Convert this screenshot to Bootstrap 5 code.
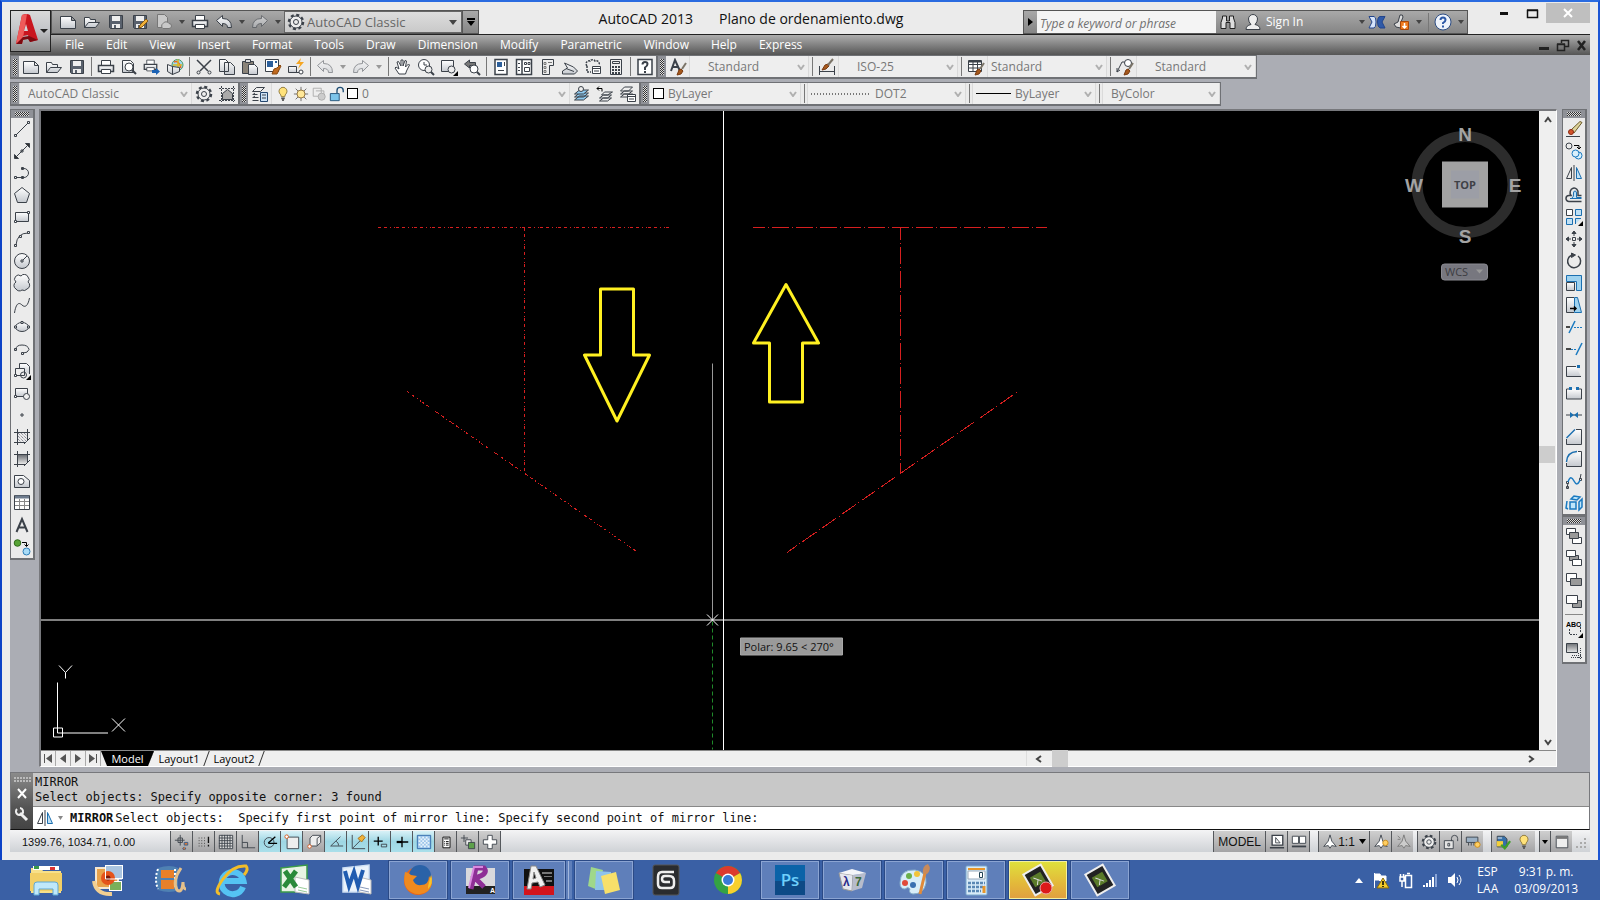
<!DOCTYPE html>
<html lang="en">
<head>
<meta charset="utf-8">
<meta name="viewport" content="width=device-width, initial-scale=1">
<title>AutoCAD 2013 - Plano de ordenamiento.dwg</title>
<link href="https://cdn.jsdelivr.net/npm/bootstrap@5.3.0/dist/css/bootstrap.min.css" rel="stylesheet">
<style>
:root{--ui:"Open Sans","Noto Sans",sans-serif;--edge:#6f7175;--face:#ebebeb;--dock:#abadb4}
body{font:12px/16px var(--ui);color:#111;background:#ebebeb;overflow:hidden}
button,select,input{font:inherit;color:inherit;border:0;background:none;padding:0;border-radius:0}
svg{display:block;flex:none;overflow:visible}
.ico{width:18px;height:18px;fill:none;stroke:#3b4149;stroke-width:1}
.frame{border:2px solid #0b41c6;border-top-color:#2a6be0;border-bottom:0;border-right-color:#1b55d4;padding:0 8px 8px;background:#ebebeb;min-height:0}
.titlebar{height:32px;padding-top:8px}
.appbtn{width:41px;height:42px;border:1px solid #222;background:linear-gradient(#d9d9d9,#c4c6ca 45%,#8c8c8c);position:relative;z-index:2}
.strip{height:24px;border:1px solid #555;background:linear-gradient(#a9a9a9,#858585)}
.strip .tb{width:24px}
.strip .dd{width:12px;color:#444}
.qcombo{width:178px;background:linear-gradient(#ddd,#c9c9c9);border:1px solid #666;color:#666;padding:0 4px 0 2px;gap:2px}
.qcombo select{font-size:13px}
.custom{width:16px;border-left:1px solid #555}
.ttl{font-size:14px;line-height:18px;color:#111;gap:26px}
.search{width:179px;background:#f4f4f4;font-style:italic;padding:3px 3px 0;color:#666}
.search::placeholder{color:#707070;opacity:1}
.signin{width:121px}
.winbtns{margin-top:-7px;height:20px;margin-left:22px}
.winbtns button{width:28px;display:flex;align-items:center;justify-content:center}
.winbtns .cls{width:44px;background:#bfbfbf}
.menubar{height:21px;background:linear-gradient(#aeaeae,#555);border-top:1px solid #222;padding-left:41px}
.menubar a{color:#fff;text-decoration:none;line-height:18px}
.menus{padding-left:14px;gap:22px}
.bar{height:24px;border:1px solid var(--edge);border-bottom-width:2px;background:var(--face)}
.row2{margin-top:3px}
.grip{width:8px;background:#8f9197;flex:none;display:flex;align-items:center;justify-content:center}
.grip::before{content:"";width:4px;height:16px;background:repeating-conic-gradient(#333 0 25%,#ddd 0 50%) 0 0/2px 2px}
.tb{width:23px;height:21px;display:flex;align-items:center;justify-content:center;flex:none}
.tb.dim{opacity:.5}
.dd{width:13px;flex:none;color:#999;display:flex;align-items:center;justify-content:center}
.tsep{width:6px;flex:none}
.tsep::before{content:"";display:block;width:1px;height:19px;margin:1px auto 0;background:#777}
.combo{background-color:#eee;border-left:1px solid #dadada;border-right:1px solid #dadada;color:#777;display:flex;align-items:center;gap:2px;padding-left:3px}
.combo select,.qcombo select{appearance:none;flex:1 1 0;min-width:0;height:100%;outline:0}
.combo select{background:url("data:image/svg+xml,%3Csvg xmlns='http://www.w3.org/2000/svg' width='8' height='6'%3E%3Cpath d='M1 1l3 4 3-4' fill='none' stroke='%23b0b0b0' stroke-width='2'/%3E%3C/svg%3E") no-repeat right 3px center}
.cb-style{width:120px}.in18{padding-left:18px}
.cb-ws{width:173px;padding-left:8px}.cb-lay{width:299px}.cb-col{width:152px}.cb-lt{width:159px}.cb-lw{width:124px}.cb-ps{width:118px;padding-left:8px}
.swatch{width:11px;height:11px;border:1px solid #000;background:#fff;flex:none;margin-right:2px}
.combo .ico{width:16px;height:16px}
.dockarea{background:var(--dock);min-height:0}
.work{min-height:0;padding-top:3px}
.vdock{width:25px;border:1px solid var(--edge);border-width:1px 2px 2px 1px;background:var(--face)}
.vgrip{height:8px;background:#8f9197;display:flex;align-items:center;justify-content:center}
.vgrip::before{content:"";width:14px;height:4px;background:repeating-conic-gradient(#333 0 25%,#ddd 0 50%) 0 0/2px 2px}
.vdock .tb{height:22px;width:22px}
.rdock{margin:0 3px 0 5px}
.hsep{height:4px;border-top:1px solid #888;margin:1px 2px 0}
.viewbox{border:2px solid #77787c;border-width:2px 1px 1px 2px;border-right-color:#fff;border-bottom-color:#fff;background:#efefef;min-width:0;margin-bottom:1px}
.model-space{background:#000;min-width:0;min-height:0;position:relative;overflow:hidden}
.model-space svg{position:absolute;inset:0;width:100%;height:100%;overflow:hidden}
.vscroll{width:17px;background:#efefef;flex:none}
.vscroll button,.hscroll button{width:17px;height:17px;display:flex;align-items:center;justify-content:center}
.thumb{background:#cdcdcd;width:16px;height:17px}
.above{flex:53 1 0}.below{flex:45 1 0}
.tabrow{height:16px;background:#efefef;border-top:1px solid #888;font-size:11px;line-height:15px}
.tabrow a{color:#000;text-decoration:none;position:relative;width:55px;padding-right:5px;text-align:center;display:block}
.tabrow a::after{content:"";position:absolute;right:2px;top:0;width:1px;height:15px;background:#333;transform:skewX(-20deg)}
.tabrow a.on{background:#000;color:#fff;width:53px;padding:0;clip-path:polygon(0 0,100% 0,calc(100% - 6px) 100%,6px 100%)}
.nav15{width:15px;height:15px;border-right:1px solid #aaa;display:flex;align-items:center;justify-content:center}
.hscroll{width:35%;border-left:1px solid #ddd;padding-right:17px}
.cmd{height:58px;border:1px solid #77787c;border-bottom-color:#111;font:12px/15px "DejaVu Sans Mono","Liberation Mono",monospace;white-space:pre}
.cmdside{width:22px;background:linear-gradient(#8b8b8b,#555 60%,#444)}
.hist{background:#c8c8c8;height:34px;padding:2px 2px 0;border-bottom:1px solid #888}
.prompt{background:#fff;height:22px;padding-left:3px}
.prompt b{font-weight:700;margin:0 2px 0 3px}
.prompt input{flex:1 1 0;min-width:0;outline:0}
.statusbar{height:22px;background:linear-gradient(#f4f4f5,#cfd2d6);padding-top:1px;font:12px/16px "Liberation Sans",Arial,sans-serif}
.statusbar .ico{width:16px;height:16px}
.coord{width:160px;padding-left:12px;font-size:11px}
.sb{width:22px;height:21px;border-left:1px solid #55585c;background:linear-gradient(#cfcfcf,#a3a3a5);display:flex;align-items:center;justify-content:center;flex:none}
.sb.act{background:linear-gradient(#d8f1f7,#9fd7e4 50%,#a9dfea)}
.sb.rule{width:1px}
.sb.scl{width:51px}
.sb.more{width:11px}
.taskbar{height:40px;background:#3a60a5;color:#fff;padding-left:15px}
.task{width:62px;height:38px;padding:0 2px;flex:none}
.task>span{display:flex;align-items:center;justify-content:center;height:38px;border:1px solid transparent}
.task.run>span{background:#5f7fba;border-color:#8ba4d2;outline:1px solid #2b4a86}
.task.rec>span{background:linear-gradient(#dfe03c,#e3b83a 60%,#e0a040);border-color:#f3efa0;outline:1px solid #2b4a86}
.task.stack>span{margin-right:6px;box-shadow:3px 0 0 #5f7fba,4px 0 0 #a3b7dc,7px 0 0 #5f7fba}
.task .ico{width:34px;height:34px;stroke:none}
.tray{gap:10px;padding-right:22px}
.clock{line-height:17px}
.tray .clock+.clock{margin-left:6px}
</style>
</head>
<body class="vh-100 d-flex flex-column">

<svg width="0" height="0" class="position-absolute" aria-hidden="true"><defs>
<linearGradient id="g1" x2="0" y2="1"><stop stop-color="#fff"/><stop offset="1" stop-color="#c4c8ce"/></linearGradient>
<linearGradient id="g2" x2="0" y2="1"><stop stop-color="#6d7075"/><stop offset="1" stop-color="#e8e8e8"/></linearGradient>
<symbol id="new" viewBox="0 0 18 18"><path fill="url(#g1)" d="M1.500 3.500h11l4 4v8h-15zM12.500 3.500v4h4"/></symbol>
<symbol id="open" viewBox="0 0 18 18"><path fill="url(#g1)" d="M1.500 14.500v-10h5l1 2h5v3M1.500 14.500l4-5h11l-4 5z"/></symbol>
<symbol id="save" viewBox="0 0 18 18"><path fill="#59616d" d="M2.500 2.500h13v13h-12l-1-1z"/><path fill="#eee" stroke="none" d="M5 3h8v5H5zM5 11h8v4H5z"/><path fill="#59616d" stroke="none" d="M7 12h2v3H7z"/></symbol>
<symbol id="saveas" viewBox="0 0 18 18"><use href="#save"/><path d="M8 15l1-3 6-6 2 2-6 6z" fill="#f0b23a" stroke="#8a5a12"/></symbol>
<symbol id="export" viewBox="0 0 18 18"><g stroke="#777" fill="#c9c9c9"><path d="M2.500 1.500h7l3 3v10h-10z"/><path d="M8 15.500a3 3 0 010-5 3.500 3.500 0 016 0 2.500 2.500 0 010 5z"/></g></symbol>
<symbol id="print" viewBox="0 0 18 18"><path fill="#fff" d="M4.500 7V2.500h9V7"/><path fill="url(#g1)" stroke-width="1.500" d="M1.500 7.500h15v6h-15z"/><path fill="#fff" d="M4.500 11.500h9v4h-9z"/></symbol>
<symbol id="preview" viewBox="0 0 18 18"><path fill="url(#g1)" d="M2.500 2.500h8l3 3v9h-11z"/><circle cx="9" cy="9" r="4" fill="#fff"/><path stroke-width="2" d="M12 12l4 4"/></symbol>
<symbol id="publish" viewBox="0 0 18 18"><use href="#print" width="15" height="15"/><path fill="#1b62b5" stroke="none" d="M9 12h4v-2l4 3.500-4 3.500v-2H9z"/></symbol>
<symbol id="cube3d" viewBox="0 0 18 18"><circle cx="11.500" cy="7" r="5.500" fill="#9fd8ef" stroke="#4a9a6a"/><path stroke="#e8632a" stroke-width="1.500" d="M8 4q5-2 7 6"/><path stroke="#dcb820" stroke-width="1.500" d="M12 1.500v9M7 7h9"/><path fill="url(#g1)" d="M1.500 6.500l5 2v8l-5-3zM6.500 8.500l7 1v4l-7 3z"/></symbol>
<symbol id="cut" viewBox="0 0 18 18"><path stroke-width="1.500" d="M2 2l11 11M16 2L5 13"/><circle cx="3.500" cy="14.500" r="1.500"/><circle cx="14.500" cy="14.500" r="1.500"/></symbol>
<symbol id="copy" viewBox="0 0 18 18"><path fill="url(#g1)" d="M1.500 1.500h6l3 3v9h-9zM6.500 4.500h6l4 4v8h-10z"/></symbol>
<symbol id="paste" viewBox="0 0 18 18"><path fill="#8a8378" d="M1.500 3.500h11v12h-11z"/><path fill="#ddd" d="M4.500 1.500h5v3h-5z"/><path fill="url(#g1)" d="M7.500 6.500h6l3 3v7h-9z"/></symbol>
<symbol id="match" viewBox="0 0 18 18"><path fill="#fff" d="M1.500 1.500h13v12h-13z"/><path fill="#2c5f9b" stroke="none" d="M3 3h6v6H3zM11 3h2v2h-2z"/><path fill="#c06a1e" stroke="#8a4a12" d="M8 16l2-5 3-1 3-3 1 1-2 4-2 4z"/></symbol>
<symbol id="blk" viewBox="0 0 18 18"><path fill="url(#g1)" d="M1.500 14.500v-6h8v6zM9 14.500h3"/><circle cx="14" cy="14" r="2" fill="#fff"/><path stroke="none" fill="#f5a623" d="M14 0l-5 6h4l-2 5 6-7h-4z"/></symbol>
<symbol id="undo" viewBox="0 0 18 18"><path fill="url(#g1)" d="M1.500 7.500l6-5v3q9 0 9 9h-4q0-4-5-4v3z"/></symbol>
<symbol id="redo" viewBox="0 0 18 18"><path fill="url(#g1)" d="M16.500 7.500l-6-5v3q-9 0-9 9h4q0-4 5-4v3z"/></symbol>
<symbol id="pan" viewBox="0 0 18 18"><path fill="#fff" d="M5 16l-4-6 1-1 3 2-2-7 1.500-.5L7 8l0-6h2v6l2-5.500 1.500.5-1 6 3-3 1 1-3 6-1 3z"/></symbol>
<symbol id="zoomrt" viewBox="0 0 18 18"><circle cx="7" cy="7" r="5.500" fill="#fff"/><path d="M7 4v3h3"/><circle cx="11.500" cy="11.500" r="3.500" fill="#eee"/><path stroke-width="2" d="M14 14l3 3"/></symbol>
<symbol id="zoomwin" viewBox="0 0 18 18"><path fill="url(#g1)" d="M1.500 2.500h12v11h-12z"/><circle cx="11.500" cy="11.500" r="3.500" fill="#eee"/><path stroke="none" fill="#000" d="M18 13v5h-5z"/></symbol>
<symbol id="zoomprev" viewBox="0 0 18 18"><path fill="#777" d="M1.500 6l5-4v2.500h6v3h-6V10z"/><circle cx="11" cy="11" r="4" fill="#fff"/><path stroke-width="2" d="M14 14l3 3"/></symbol>
<symbol id="props" viewBox="0 0 18 18"><path fill="#fff" stroke-width="1.500" d="M3 1.500h12v15H3z"/><path fill="#2c5f9b" stroke="none" d="M5 4h5v5H5z"/><path d="M12.500 4v4M6 12.500h6"/></symbol>
<symbol id="dcenter" viewBox="0 0 18 18"><path fill="#fff" stroke-width="1.500" d="M1.500 1.500h15v15h-15zM7 1.500v15"/><path d="M3 5.500h2M3 9.500h2M3 12.500h2M9.500 4.500h2v2h-2zM13 4.500h2v2h-2zM9.500 9.500h5v4h-5z"/></symbol>
<symbol id="palette" viewBox="0 0 18 18"><path fill="#eee" d="M4.500 1.500h11v6h-4v9h-7z"/><path stroke="#777" d="M6 4.500h2v2H6zM10 4.500h4M6 8.500h2v2H6zM6 12.500h2v2H6z"/></symbol>
<symbol id="sheet" viewBox="0 0 18 18"><path fill="url(#g1)" d="M1.500 13l5-3-3-5 9 4 4 4-3 3h-12zM5 10.500l8 3"/></symbol>
<symbol id="markup" viewBox="0 0 18 18"><path stroke-width="1.500" stroke-dasharray="2 1" d="M3 8a3 3 0 013-5 3 3 0 015 0 3 3 0 014 4M3 8v6h4"/><path fill="#fff" d="M8.500 8.500h8v7h-8zM8.500 10.500h8M10 13h5"/></symbol>
<symbol id="calc" viewBox="0 0 18 18"><path fill="#eee" d="M3.500 1.500h11v15h-11zM5.500 3.500h7v2h-7z"/><path stroke-width="2" stroke-dasharray="2 1" d="M5 9h8M5 12h8M5 15h8"/></symbol>
<symbol id="help" viewBox="0 0 18 18"><path fill="#fff" stroke-width="1.500" d="M2 1.500h14v15H2z"/><path stroke-width="2" d="M6.500 6.500q0-2.500 2.500-2.500t2.500 2q0 2-2.500 3.500V12M9 13v2"/></symbol>
<symbol id="brush" viewBox="0 0 18 18"><path fill="#a5581c" stroke="#7a3a10" d="M8 17l2-5 2-1 2 2-2 3z"/><path stroke="#7b7468" stroke-width="2" d="M13 11l4-6"/></symbol>
<symbol id="astyle" viewBox="0 0 18 18"><path stroke-width="2" d="M2 13L6 2l5 11M3 9h6"/><use href="#brush"/></symbol>
<symbol id="dimstyle" viewBox="0 0 18 18"><path d="M1.500 8v9M16.500 8v9M2 13.500h14"/><path fill="#a5581c" stroke="#7a3a10" d="M4 12l3-5 3-1 1 2-3 3z"/><path stroke="#7b7468" stroke-width="2" d="M10 7l5-6"/></symbol>
<symbol id="tabstyle" viewBox="0 0 18 18"><path fill="#fff" d="M1.500 2.500h13v11h-13zM1.500 6.500h13M1.500 10h13M6 4v9M10.500 4v9"/><path d="M2 3.500h12" stroke-width="2"/><use href="#brush"/></symbol>
<symbol id="mlstyle" viewBox="0 0 18 18"><path d="M1 14l5-10h5M1 10v4l3-2"/><circle cx="12" cy="5" r="3.500" fill="#fff"/><use href="#brush"/></symbol>
<symbol id="gear" viewBox="0 0 18 18"><circle cx="9" cy="9" r="7" stroke-width="2.500" stroke-dasharray="3 2.500"/><circle cx="9" cy="9" r="6" fill="#eee"/><circle cx="9" cy="9" r="2.500"/></symbol>
<symbol id="wsframe" viewBox="0 0 18 18"><path stroke-dasharray="2 1" d="M1 3.500h16M1 15.500h16M3.500 1v16M15.500 1v16"/><path fill="#aaa" d="M4.500 14.500v-6l5-4 5 4v6z"/></symbol>
<symbol id="layprop" viewBox="0 0 18 18"><path fill="#eee" d="M1.500 6.500l4-4h8l-4 4zM1.500 9.500h5M1.500 12.500h6M1.500 15.500h6M4 8l-2 1.500M4 11l-2 1.500"/><path fill="#cde2f5" stroke="#24466e" d="M9.500 7.500h7v9h-7z"/><path d="M11 10h4M11 13h4"/></symbol>
<symbol id="bulb" viewBox="0 0 18 18"><path fill="#ffe27a" stroke="#8b7435" d="M7 12q0-2-2-4a4.500 4.500 0 118 0q-2 2-2 4z"/><path stroke="#555" stroke-width="2" d="M7 14h4M8 16h2"/></symbol>
<symbol id="sun" viewBox="0 0 18 18"><path stroke="#666" d="M9 1v16M1 9h16M3 3l12 12M15 3L3 15"/><circle cx="9" cy="9" r="4.500" fill="#ffe89a" stroke="#8b6b35"/></symbol>
<symbol id="vpf" viewBox="0 0 18 18"><g stroke="#aaa"><path d="M2.500 2.500h9v9h-9zM5.500 5.500h9v5"/><circle cx="12" cy="12" r="4" fill="#ccc"/></g></symbol>
<symbol id="lock" viewBox="0 0 18 18"><path fill="#7cc4ea" stroke="#1d4d74" d="M1.500 8.500h10v8h-10z"/><path stroke="#1d4d74" stroke-width="1.500" d="M9 8V5a3.500 3.500 0 017 0v2"/></symbol>
<symbol id="lockg" viewBox="0 0 18 18"><path fill="#e4e4e4" d="M1.500 7.500h10v9h-10z"/><path d="M5.500 10.500h2v3h-2zM9.500 8V5a3.500 3.500 0 017 0v3"/></symbol>
<symbol id="lay1" viewBox="0 0 18 18"><path fill="#8fcaf0" d="M1.500 15l5-4h9l-5 4zM1.500 12l5-4h9l-5 4z"/><path fill="#8fcaf0" d="M1.500 9l5-4h9l-5 4z"/><circle cx="8" cy="4" r="2.500" fill="#eee"/></symbol>
<symbol id="lay2" viewBox="0 0 18 18"><path fill="#eee" d="M3.500 16l4-3h8l-4 3zM3.500 13l4-3h8l-4 3zM5.500 10l3-3h8l-5 3z"/><path stroke="#000" d="M1 3.500h5v3M3 1.500l-2 2 2 2"/></symbol>
<symbol id="lay3" viewBox="0 0 18 18"><path fill="#eee" d="M1.500 12l4-3h8l-4 3zM1.500 9l4-3h8l-4 3zM1.500 6l4-4h8l-4 4z"/><path fill="#fff" d="M8.500 9.500h8v7h-8zM8.500 11.500h8M10 14h5"/></symbol>
<symbol id="line" viewBox="0 0 18 18"><path d="M3 15L15 3M1.500 14.500h2v2h-2zM14.500 1.500h2v2h-2z"/></symbol>
<symbol id="xline" viewBox="0 0 18 18"><path d="M2 16L16 2M8 8h2v2H8z"/><path fill="#333" d="M1.500 12.500v4h4zM12.500 1.500h4v4z"/></symbol>
<symbol id="pline" viewBox="0 0 18 18"><path d="M3 13.500h8a4.500 4.500 0 000-9h-2M1.500 12.500h2v2h-2zM8.500 12.500h2v2h-2zM8.500 3.500h2v2h-2z"/></symbol>
<symbol id="polygon" viewBox="0 0 18 18"><path fill="url(#g1)" d="M9 1.500l7.500 6-3 9h-9l-3-9z"/></symbol>
<symbol id="rect" viewBox="0 0 18 18"><path fill="url(#g1)" d="M2.500 4.500h13v9h-13z"/><path fill="#fff" d="M1.500 12.500h2v2h-2zM14.500 3.500h2v2h-2z"/></symbol>
<symbol id="arc" viewBox="0 0 18 18"><path d="M3 15Q4 3 15 3M1.500 14.500h2v2h-2zM14.500 1.500h2v2h-2zM6.500 5.500h2v2h-2z"/></symbol>
<symbol id="circ" viewBox="0 0 18 18"><circle cx="9" cy="9" r="7.500" fill="url(#g1)"/><path d="M8 8h2v2H8zM10 8l4-4"/></symbol>
<symbol id="cloud" viewBox="0 0 18 18"><path fill="url(#g1)" d="M3 8a3.500 3.500 0 015-6 4 4 0 017 1 3.500 3.500 0 010 5 4 4 0 01-1 7 4 4 0 01-5 1 4 4 0 01-6-1 4 4 0 010-7z"/></symbol>
<symbol id="spline" viewBox="0 0 18 18"><path d="M1.500 17C3 7 6 6 9 9s6 1 7.500-7"/></symbol>
<symbol id="ellipse" viewBox="0 0 18 18"><ellipse cx="9" cy="9" rx="6.500" ry="4.500" fill="url(#g1)"/><path fill="#fff" d="M1.500 8h2v2h-2zM14.500 8h2v2h-2zM8 3.500h2v2H8z"/></symbol>
<symbol id="earc" viewBox="0 0 18 18"><path d="M3 9.500Q3 5 9 5t7 4.500Q15 13 10 13M1.500 8.500h2v2h-2zM8.500 12.500h2v2h-2z"/></symbol>
<symbol id="insblk" viewBox="0 0 18 18"><path fill="url(#g1)" d="M6.500 6V1.500h7l3 3V12"/><path fill="#eee" d="M2.500 6.500h9v7h-9z"/><circle cx="10.500" cy="13" r="3"/><path fill="#fff" d="M1.500 12.500h2v2h-2z"/><path stroke="none" fill="#000" d="M18 13v5h-5z"/></symbol>
<symbol id="mkblk" viewBox="0 0 18 18"><path fill="url(#g1)" d="M2.500 4.500h12v8h-12z"/><circle cx="13.500" cy="12.500" r="3" fill="#eee"/><path fill="#fff" d="M1.500 11.500h2v2h-2z"/></symbol>
<symbol id="point" viewBox="0 0 18 18"><path d="M8 8h2v2H8z"/></symbol>
<symbol id="hatch" viewBox="0 0 18 18"><path d="M1 4.500h16M1 14.500h12M4.500 1v16M14.500 1v12M11 16l6-6"/><path stroke="#667" stroke-dasharray="1 1" d="M5 5l9 9M8 5l6 6M5 8l6 6M11 5l3 3M5 11l3 3"/></symbol>
<symbol id="grad" viewBox="0 0 18 18"><path fill="url(#g2)" stroke="none" d="M5 5h9v9H5z"/><path d="M1 4.500h16M1 14.500h12M4.500 1v16M14.500 1v12M11 16l6-6"/></symbol>
<symbol id="region" viewBox="0 0 18 18"><path fill="url(#g1)" d="M1.500 3.500h9l6 5v7h-15z"/><circle cx="8" cy="9.500" r="3" fill="#fff"/></symbol>
<symbol id="table" viewBox="0 0 18 18"><path fill="#fff" d="M1.500 1.500h15v14h-15z"/><path stroke="#888" d="M2 7.500h14M2 11.500h14M6.500 5v10M11.500 5v10"/><path stroke-width="3" stroke="#6d7b8d" d="M2 3h14"/></symbol>
<symbol id="mtext" viewBox="0 0 18 18"><path stroke-width="2" d="M3.500 16L9 3l5.500 13M5.500 11.500h7"/></symbol>
<symbol id="addsel" viewBox="0 0 18 18"><circle cx="4.500" cy="5" r="3.300" fill="#57a336" stroke="#2f6a1a"/><circle cx="13.500" cy="13.500" r="3.500" fill="#a9dcf7" stroke="#2f7fb8"/><path stroke="#000" d="M9 4.500h4.500V8M11.500 6.500l2 2 2-2"/></symbol>
<symbol id="erase" viewBox="0 0 18 18"><path d="M1 16.500h14"/><path fill="#dcd29a" stroke="#6b5a2a" d="M6 10l9-8.500 2 1L9 13z"/><circle cx="6" cy="12" r="2.500" fill="#d4532a" stroke="#8a2a12"/></symbol>
<symbol id="cp" viewBox="0 0 18 18"><circle cx="4" cy="4" r="3"/><path stroke="#000" d="M9 3.500h5V7M12 5l2 2 2-2"/><g fill="#d9f0fc" stroke="#1b7ac0"><circle cx="13.500" cy="13.500" r="3.500"/><circle cx="10.500" cy="11.500" r="3.500"/></g></symbol>
<symbol id="mirror" viewBox="0 0 18 18"><path d="M6.500 3.500v11h-5zM9 1v16"/><path fill="#bfe0f5" stroke="#1b6fb0" d="M11.500 3.500v11h5z"/></symbol>
<symbol id="offset" viewBox="0 0 18 18"><path stroke-width="1.500" d="M16.500 15.500H4a3 3 0 010-6h2a4 4.500 0 117-2v2h3.500"/><path fill="#bfe0f5" stroke="#1b6fb0" d="M16.500 12.500H5M7 12q2-1 1.500-5a1.500 2 0 013 0v4.500h5"/></symbol>
<symbol id="array" viewBox="0 0 18 18"><path fill="#fff" d="M1.500 1.500h6v6h-6z"/><path fill="#bfe0f5" stroke="#1b6fb0" d="M10.500 1.500h6v6h-6zM1.500 10.500h6v6h-6zM10.500 16v-5.500H16"/><path stroke="none" fill="#000" d="M18 13v5h-5z"/></symbol>
<symbol id="move" viewBox="0 0 18 18"><path d="M7.500 7.500h3v3h-3zM1 9h5M12 9h5M9 1v5M9 12v5"/><path fill="#3b4149" d="M1 9l2.500-2v4zM17 9l-2.500-2v4zM9 1L7 3.500h4zM9 17l-2-2.500h4z"/></symbol>
<symbol id="rotate" viewBox="0 0 18 18"><path stroke-width="1.500" d="M6 3.500a6.500 6.500 0 107 .5"/><path fill="#3b4149" d="M6.500 1l4 2-4 2.500z"/></symbol>
<symbol id="scale" viewBox="0 0 18 18"><path fill="#9fd2ef" stroke="#1b6fb0" d="M1.500 1.500h15v15h-5v-9h-10z"/><path fill="url(#g1)" d="M1.500 8.500h8v8h-8z"/></symbol>
<symbol id="stretch" viewBox="0 0 18 18"><path fill="url(#g1)" d="M9 1.500H1.500v15H9"/><path fill="#9fd2ef" stroke="#1b6fb0" d="M9.500 1.500h3l4 15h-7z"/><path stroke="#000" stroke-width="1.500" d="M5 12.500h6M9 10.500l2 2-2 2"/></symbol>
<symbol id="trim" viewBox="0 0 18 18"><path stroke="#111" stroke-width="1.500" d="M1 9h4"/><path stroke="#1b7ac0" stroke-width="1.500" d="M4 15L10 3"/><path stroke="#1b7ac0" stroke-dasharray="2 1" d="M9 9.500h8"/></symbol>
<symbol id="extend" viewBox="0 0 18 18"><path stroke="#111" stroke-width="1.500" d="M1 9h5"/><path stroke="#1b7ac0" stroke-dasharray="2 1" d="M6 9.500h5"/><path stroke="#1b7ac0" stroke-width="1.500" d="M11 15l6-12"/></symbol>
<symbol id="brkpt" viewBox="0 0 18 18"><path fill="url(#g1)" d="M16 14.500H1.500v-10H11"/><path d="M12 3h3v3h-3z" fill="#1b6fb0" stroke="none"/></symbol>
<symbol id="brk" viewBox="0 0 18 18"><path fill="url(#g1)" d="M4 5H1.500v10h15V5H14"/><path d="M4 3h3v3H4zM11 3h3v3h-3z" fill="#1b6fb0" stroke="none"/></symbol>
<symbol id="join" viewBox="0 0 18 18"><path d="M1 9h16"/><path fill="#1b6fb0" stroke="none" d="M5 6l4 3-4 3zM13 6L9 9l4 3z"/></symbol>
<symbol id="chamfer" viewBox="0 0 18 18"><path fill="url(#g1)" d="M1.500 11v5.500h15v-15H11"/><path stroke="#1b6fb0" stroke-width="1.500" d="M1.500 10L10 1.500"/></symbol>
<symbol id="fillet" viewBox="0 0 18 18"><path fill="url(#g1)" d="M1.500 13v3.500h15v-15H13"/><path stroke="#1b6fb0" stroke-width="1.500" d="M1.500 12Q2 2 12 1.500"/></symbol>
<symbol id="blend" viewBox="0 0 18 18"><path d="M2 16l1-5M15 7l1-5M1.500 14.500h2v2h-2zM1.500 9.500h2v2h-2zM14.500 6.500h2v2h-2z"/><path stroke="#1b7ac0" stroke-width="1.500" d="M3 10c2-6 4-5 6-1s4 4 6-1"/></symbol>
<symbol id="explode" viewBox="0 0 18 18"><path fill="#bfe6fa" stroke="#1b7ac0" stroke-width="1.500" d="M5 8h6v7H5zM2 7l-1 7 2 1M6 5l3-3 6 1-3 3zM14 8l3-3v8l-3 3z"/></symbol>
<symbol id="ord1" viewBox="0 0 18 18"><path fill="#fff" d="M1.500 1.500h9v6h-9zM7.500 10.500h9v6h-9z"/><path fill="#999" d="M4.500 5.500h9v6h-9z"/></symbol>
<symbol id="ord2" viewBox="0 0 18 18"><path fill="#999" d="M4.500 6.500h9v5h-9z"/><path fill="#fff" d="M1.500 1.500h9v6h-9zM7.500 10.500h9v6h-9z"/></symbol>
<symbol id="ord3" viewBox="0 0 18 18"><path fill="#fff" d="M1.500 2.500h10v8h-10z"/><path fill="#999" d="M5.500 7.500h11v7h-11z"/></symbol>
<symbol id="ord4" viewBox="0 0 18 18"><path fill="#999" d="M7.500 7.500h9v7h-9z"/><path fill="#fff" d="M1.500 2.500h11v8h-11z"/></symbol>
<symbol id="ordtxt" viewBox="0 0 18 18"><text x="1" y="7" font-family="Liberation Sans" font-weight="700" font-size="7" fill="#000" stroke="none">ABC</text><path stroke-dasharray="2 1" d="M4.500 9v5.500H12M15.500 4v8"/><path stroke="none" fill="#000" d="M18 13v5h-5z"/></symbol>
<symbol id="ordhatch" viewBox="0 0 18 18"><path fill="url(#g2)" d="M1.500 1.500h11v9h-11z"/><path stroke-dasharray="1 1" d="M7 13.500h9M15.500 6v11M6 15.500h11M13.500 11v6"/></symbol>
<symbol id="snap" viewBox="0 0 18 18"><path d="M1 7h11M7 1v12M4.500 4.500h5v5h-5z"/><path fill="#d5783a" stroke="#345c8c" d="M11.500 9.500h4v3h-4zM11 15a1.500 1.500 0 101 0"/></symbol>
<symbol id="dots" viewBox="0 0 18 18"><path stroke="#333" stroke-dasharray="1 2" d="M3 4.500h9M3 7.500h9M3 10.500h9M3 13.500h9"/><path stroke="#111" stroke-width="1.500" d="M14 3v7M14 12v2"/></symbol>
<symbol id="grid" viewBox="0 0 18 18"><path fill="#ddd" d="M1.500 1.500h15v15h-15zM4.500 1v15M7.500 1v15M10.500 1v15M13.500 1v15M1 4.500h15M1 7.500h15M1 10.500h15M1 13.500h15"/></symbol>
<symbol id="ortho" viewBox="0 0 18 18"><path d="M2.500 1v14.500H17M2.500 9.500h6v6"/></symbol>
<symbol id="polar" viewBox="0 0 18 18"><circle cx="8" cy="9.500" r="5.500"/><path stroke="#000" stroke-width="1.500" d="M7 10l8-7M7 10.500h10"/></symbol>
<symbol id="osnap" viewBox="0 0 18 18"><path fill="#eee" d="M3.500 3.500h13v13h-13z"/><circle cx="3" cy="3" r="2" stroke="#d9581a" fill="#fff"/></symbol>
<symbol id="osnap3" viewBox="0 0 18 18"><path fill="#eee" d="M4.500 4.500l3-3h9v8l-4 4h-8zM12.500 13V5l4-3"/><circle cx="4" cy="14" r="2" stroke="#d9581a" fill="#fff"/></symbol>
<symbol id="otrack" viewBox="0 0 18 18"><path d="M14 3L3 13.500h14M9 8q3 2 3 5"/></symbol>
<symbol id="ducs" viewBox="0 0 18 18"><path d="M2.500 1v15.500H17M3 16L12 7"/><path fill="#f0b23a" stroke="#a56a12" d="M9 5l5-4 3 3-4 5z"/></symbol>
<symbol id="dyn" viewBox="0 0 18 18"><path stroke="#000" stroke-width="1.500" d="M2 8h10M7 3v10"/><path d="M10.500 11.500h6v3h-6z"/></symbol>
<symbol id="lwt" viewBox="0 0 18 18"><path stroke="#000" stroke-width="2.500" d="M3 9h6"/><path stroke="#000" stroke-width="1.500" d="M9 9h7M9 3v12"/></symbol>
<symbol id="tpy" viewBox="0 0 18 18"><path fill="#9cc5ea" stroke="#2c66a8" d="M1.500 1.500h15v15h-15z"/><path stroke="#e8f3fb" stroke-width="2" stroke-dasharray="2 2" d="M3 4h12M5 6h10M3 8h12M5 10h10M3 12h12M5 14h10"/></symbol>
<symbol id="qp" viewBox="0 0 18 18"><path fill="#fff" stroke="#000" d="M5.500 3.500h8v12h-8z"/><path stroke="#000" d="M7 5.500h5M7 8.500h1M7 10.500h1M7 12.500h1M9 8.500h3M9 10.500h3M9 12.500h3"/></symbol>
<symbol id="cycle" viewBox="0 0 18 18"><path d="M1 4.500h8M4.500 1v8"/><path fill="#eee" d="M6.500 6.500h6v6h-6z"/><path fill="#5da04a" d="M9.500 9.500h7v7h-7z"/></symbol>
<symbol id="plus" viewBox="0 0 18 18"><path fill="#fff" d="M6.500 1.500h5v5h5v5h-5v5h-5v-5h-5v-5h5z"/></symbol>
<symbol id="lay-p" viewBox="0 0 18 18"><path fill="#fff" stroke-width="1.500" d="M3.500 1.500h12v11h-12zM1 15.500h16"/><path d="M7.500 4v6h5z"/></symbol>
<symbol id="quick" viewBox="0 0 18 18"><path fill="#fff" d="M1.500 2.500h7v8h-7zM9.500 2.500h7v8h-7z"/><path stroke-width="2" d="M1 14h16"/></symbol>
<symbol id="anno" viewBox="0 0 18 18"><path fill="#fff" d="M9 1l2 7 5 6-5-1-2 3-2-3-5 1 5-6z"/></symbol>
<symbol id="annog" viewBox="0 0 18 18"><path fill="#ccc" stroke="#777" d="M10 1l2 7 5 6-5-1-2 3-2-3-5 1 5-6zM3 2l3 3M3 6h3"/></symbol>
<symbol id="anno2" viewBox="0 0 18 18"><use href="#anno"/><circle cx="14" cy="10" r="3" fill="#ffcf62" stroke="#c98a1a"/></symbol>
<symbol id="hw" viewBox="0 0 18 18"><path fill="#9bb0c4" d="M1.500 3.500h13v6h-13zM4 10v3M7 10v3M10 10v3"/><circle cx="14" cy="12" r="3" fill="#ffcf62" stroke="#c98a1a"/></symbol>
<symbol id="trust" viewBox="0 0 18 18"><path fill="#3770a8" d="M2.500 2.500h8l3 3v9h-11z"/><path fill="#f3cf3a" stroke="none" d="M2 8h7v6H2z"/><path stroke="#fff" d="M3 4.500h5"/><path stroke="#3fa02a" stroke-width="2.500" d="M7 12l4 4 6-8"/></symbol>
<symbol id="clean" viewBox="0 0 18 18"><path fill="#eee" d="M2.500 2.500h13v13h-13z"/><path stroke-width="3" stroke="#777" d="M3 4h12"/></symbol>
<symbol id="bino" viewBox="0 0 18 18"><path fill="#ddd" stroke="#222" d="M3.500 5L2 9.500v6h5v-6h4v6h5v-6L14.500 5V3h-4v5h-3V3h-4z"/></symbol>
<symbol id="user" viewBox="0 0 18 18"><path fill="#eee" d="M2 16.500q0-4 5-5Q4.500 9 4.500 6a4.500 4.500 0 019 0q0 3-2.500 5.500 5 1 5 5z"/></symbol>
<symbol id="xch" viewBox="0 0 18 18"><path fill="#d6e4fa" stroke="#23458c" d="M1 3.500h5q2 0 2 5.500t-2 6H1L4 9z"/><path fill="#2f5aa8" stroke="#23458c" d="M17 3.500h-5Q9.500 4 9.500 9t2.500 6h5L14 9z"/></symbol>
<symbol id="a360" viewBox="0 0 18 18"><path fill="#ddd" d="M8 2q3-1 3 2L9 9l5 3-1 4-9-2-2-3 4-2z"/><path fill="#ee7a1e" stroke="#a8480a" d="M8.500 8.500h8v8h-8z"/><path stroke="#fff" stroke-width="1.500" d="M12.500 10v5M10.500 13l2 2 2-2"/></symbol>
<symbol id="qhelp" viewBox="0 0 18 18"><circle cx="9" cy="9" r="8" fill="#eef3fb" stroke="#2d4d84"/><path stroke="#2d59a8" stroke-width="2" d="M6.500 7q0-2.500 2.500-2.500T11.500 7q0 1.500-2.500 3v1M9 12.500v2"/></symbol>
</defs></svg>

<div class="frame flex-grow-1 d-flex flex-column">
  <header class="titlebar d-flex">
    <button class="appbtn flex-shrink-0" aria-label="Application menu">
      <svg width="39" height="40" viewBox="0 0 39 40"><path fill="#c9151e" d="M5 33L11 4q5-2 8 0l8 25-8 2-2-7-5 1-1 7z"/><path fill="#ef5a5a" d="M11 4l5-1-5 30-6 0z"/><path fill="#7e0a10" d="M5 33l7-7 6-1 9 4-8 2-2-3-5 1-1 4z"/><path fill="#d5d5d8" d="M13 20l2-7 2 7z"/><path fill="#222" d="M29 18h8l-4 4z"/></svg>
    </button>
    <div class="strip d-flex align-items-stretch flex-shrink-0 ps-1">
      <div class="d-flex" data-tools="new:New open:Open save:Save saveas:Save_as export:Export v print:Plot undo:Undo v ~redo:Redo v"></div>
      <div class="qcombo d-flex align-items-center"><svg class="ico"><use href="#gear"/></svg><select aria-label="Workspace switching"><option>AutoCAD Classic</option></select><svg width="8" height="5"><path d="M0 0h8L4 5z" fill="#444"/></svg></div>
      <button class="custom d-flex align-items-center justify-content-center" aria-label="Customize"><svg width="8" height="8"><path d="M0 0h8v2H0zM0 3h8L4 8z" fill="#000"/></svg></button>
    </div>
    <div class="ttl d-flex flex-grow-1 justify-content-center"><span>AutoCAD 2013</span><span>Plano de ordenamiento.dwg</span></div>
    <div class="strip d-flex align-items-stretch flex-shrink-0">
      <button class="px-1" aria-label="Collapse"><svg width="5" height="8"><path d="M0 0l5 4-5 4z" fill="#000"/></svg></button>
      <input class="search" type="text" aria-label="Search" placeholder="Type a keyword or phrase">
      <div class="d-flex text-white align-items-center">
        <button class="tb" aria-label="Find"><svg class="ico"><use href="#bino"/></svg></button>
        <button class="signin d-flex align-items-center ms-1"><svg class="ico me-1"><use href="#user"/></svg>Sign In<svg class="ms-auto" width="6" height="4"><path d="M0 0h6L3 4z" fill="#444"/></svg></button>
        <div class="d-flex" data-tools="xch:Exchange a360:Autodesk_360 v | qhelp:Help v"></div>
      </div>
    </div>
    <div class="d-flex flex-shrink-0 winbtns">
      <button aria-label="Minimize"><svg width="8" height="3"><path d="M0 0h8v3H0z" fill="#111"/></svg></button>
      <button aria-label="Maximize"><svg width="11" height="9"><path d="M.5 1.500h10v7H.5zM0 1h11" fill="none" stroke="#111" stroke-width="1.500"/></svg></button>
      <button class="cls" aria-label="Close"><svg width="8" height="8"><path d="M0 0l8 8M8 0L0 8" stroke="#fff" stroke-width="2"/></svg></button>
    </div>
  </header>
  <nav class="menubar d-flex align-items-center flex-shrink-0">
    <div class="menus d-flex">
      <a href="#">File</a><a href="#">Edit</a><a href="#">View</a><a href="#">Insert</a><a href="#">Format</a><a href="#">Tools</a><a href="#">Draw</a><a href="#">Dimension</a><a href="#">Modify</a><a href="#">Parametric</a><a href="#">Window</a><a href="#">Help</a><a href="#">Express</a>
    </div>
    <div class="ms-auto d-flex align-items-center gap-2 pe-1">
      <button aria-label="Minimize drawing"><svg width="10" height="9"><path d="M0 6h10v3H0z" fill="#222"/></svg></button>
      <button aria-label="Restore drawing"><svg width="12" height="11"><path d="M4.500 3V.5h7v6H8M.5 4.500h7v6h-7zM0 4h8" fill="none" stroke="#222" stroke-width="1.500"/></svg></button>
      <button aria-label="Close drawing"><svg width="9" height="9"><path d="M1 0l7 9M8 0L1 9" stroke="#222" stroke-width="2.500"/></svg></button>
    </div>
  </nav>

  <main class="dockarea flex-grow-1 d-flex flex-column">
    <div class="d-flex">
      <div class="bar d-flex"><span class="grip"></span><div class="d-flex" data-tools="new:New open:Open save:Save | print:Plot preview:Plot_preview publish:Publish cube3d:3D_print | cut:Cut copy:Copy paste:Paste match:Match_properties blk:Block_editor | ~undo:Undo v ~redo:Redo v | pan:Pan zoomrt:Zoom zoomwin:Zoom_window zoomprev:Zoom_previous | props:Properties dcenter:Design_center palette:Tool_palettes sheet:Sheet_sets markup:Markup calc:Calculator | help:Help"></div></div>
      <div class="bar d-flex"><span class="grip"></span><div class="d-flex" data-tools="astyle:Text_style"></div>
        <div class="combo cb-style in18"><select aria-label="Text style"><option>Standard</option></select></div><span class="tsep"></span>
        <div class="d-flex" data-tools="dimstyle:Dimension_style"></div><div class="combo cb-style in18"><select aria-label="Dimension style"><option>ISO-25</option></select></div><span class="tsep"></span>
        <div class="d-flex" data-tools="tabstyle:Table_style"></div><div class="combo cb-style"><select aria-label="Table style"><option>Standard</option></select></div><span class="tsep"></span>
        <div class="d-flex" data-tools="mlstyle:Multileader_style"></div><div class="combo cb-style in18"><select aria-label="Multileader style"><option>Standard</option></select></div>
      </div>
    </div>
    <div class="d-flex row2">
      <div class="bar d-flex"><span class="grip"></span><div class="combo cb-ws"><select aria-label="Workspace"><option>AutoCAD Classic</option></select></div><div class="d-flex" data-tools="gear:Workspace_settings wsframe:My_workspace"></div></div>
      <div class="bar d-flex"><span class="grip"></span><div class="d-flex" data-tools="layprop:Layer_properties"></div>
        <div class="combo cb-lay"><svg class="ico"><use href="#bulb"/></svg><svg class="ico"><use href="#sun"/></svg><svg class="ico"><use href="#vpf"/></svg><svg class="ico"><use href="#lock"/></svg><span class="swatch"></span><select aria-label="Layer"><option>0</option></select></div>
        <div class="d-flex" data-tools="lay1:Make_layer_current lay2:Layer_previous lay3:Layer_states"></div></div>
      <div class="bar d-flex"><span class="grip"></span>
        <div class="combo cb-col"><span class="swatch"></span><select aria-label="Color"><option>ByLayer</option></select></div><span class="tsep"></span>
        <div class="combo cb-lt"><svg width="62" height="2"><path d="M0 1h60" stroke="#000" stroke-dasharray="1 2"/></svg><select aria-label="Linetype"><option>DOT2</option></select></div><span class="tsep"></span>
        <div class="combo cb-lw"><svg width="37" height="2"><path d="M0 .5h35" stroke="#000"/></svg><select aria-label="Lineweight"><option>ByLayer</option></select></div><span class="tsep"></span>
        <div class="combo cb-ps"><select aria-label="Plot style"><option>ByColor</option></select></div></div>
    </div>

    <div class="d-flex flex-grow-1 work">
      <aside class="vdock align-self-start"><div class="vgrip"></div><div data-tools="line:Line xline:Construction_line pline:Polyline polygon:Polygon rect:Rectangle arc:Arc circ:Circle cloud:Revision_cloud spline:Spline ellipse:Ellipse earc:Ellipse_arc insblk:Insert_block mkblk:Make_block point:Point hatch:Hatch grad:Gradient region:Region table:Table mtext:Multiline_text addsel:Add_selected"></div></aside>
      <section class="viewbox flex-grow-1 d-flex flex-column ms-1">
        <div class="d-flex flex-grow-1">
          <div class="model-space flex-grow-1">
            <svg viewBox="41 112 1498 638" preserveAspectRatio="xMidYMid meet" fill="none" stroke-width="1">
              <g stroke="#d61f1f" shape-rendering="crispEdges">
                <path stroke-dasharray="3 3 3 3 1 3 1 1" d="M378 227.500h294M524.500 228v246M407 392l231 161"/>
                <path stroke-dasharray="17 3 1 3" stroke-dashoffset="5" d="M753 227.500h294M900.500 228v246M787 553l231-161"/>
              </g>
              <path stroke="#fff021" stroke-width="3" stroke-linejoin="round" d="M600.500 289.500h33v66h16l-32.500 66-32.500-66h16zM786 285l32.500 58.500h-16v59h-33v-59h-16z"/>
              <path stroke="#999" d="M712.500 364v256"/><path stroke="#1f8a2a" stroke-dasharray="4 3" d="M712.500 622v128"/>
              <g stroke="#fff"><path d="M0 620.500h1600M723.500 0v900M707 615l11 11M718 615l-11 11"/>
              <path d="M57.500 683v50.500H108M53.500 728.500h9v9h-9zM59 666l6.500 7 6.500-7M65.500 673v6M112 719l13 13M125 719l-13 13"/></g>
              <circle cx="1465" cy="185" r="48" stroke="#2c2c2c" stroke-width="11"/>
              <path fill="#a2a2a2" d="M1442 162h46v46h-46z"/><path fill="#9c9ea6" d="M1451 171h28v28h-28z"/>
              <g font-family="Liberation Sans" font-weight="700" text-anchor="middle" font-size="19" fill="#a3a3a3"><text x="1465" y="141">N</text><text x="1465" y="243">S</text><text x="1414" y="192">W</text><text x="1515" y="192">E</text>
              <text x="1465" y="189" font-family="Open Sans" font-size="11" fill="#3f4146">TOP</text></g>
              <rect x="1441.500" y="264.500" width="46" height="16" rx="3" fill="#77777f" stroke="#8b8b92"/>
              <text x="1445" y="276" font-family="Open Sans" font-size="11" fill="#3c3c42">WCS</text><path fill="#999" d="M1476 270h7l-3.500 4z"/>
              <path fill="#9a9a9a" stroke="#a8a8a8" d="M740.500 638.500h102v17h-102z"/><text x="744" y="651" font-family="Open Sans" font-size="11" fill="#111">Polar: 9.65 &lt; 270°</text>
            </svg>
          </div>
          <div class="vscroll d-flex flex-column">
            <button aria-label="Scroll up"><svg width="8" height="6"><path d="M1 5l3-4 3 4" fill="none" stroke="#444" stroke-width="2"/></svg></button>
            <div class="flex-grow-1 d-flex flex-column"><div class="above"></div><div class="thumb"></div><div class="below"></div></div>
            <button aria-label="Scroll down"><svg width="8" height="6"><path d="M1 1l3 4 3-4" fill="none" stroke="#444" stroke-width="2"/></svg></button>
          </div>
        </div>
        <div class="tabrow d-flex flex-shrink-0">
          <button class="nav15" aria-label="First layout"><svg width="8" height="9"><path d="M0 0h1v9H0zM8 0v9L2 4.500z" fill="#555"/></svg></button>
          <button class="nav15" aria-label="Previous layout"><svg width="6" height="9"><path d="M6 0v9L0 4.500z" fill="#555"/></svg></button>
          <button class="nav15" aria-label="Next layout"><svg width="6" height="9"><path d="M0 0v9l6-4.500z" fill="#555"/></svg></button>
          <button class="nav15" aria-label="Last layout"><svg width="8" height="9"><path d="M7 0h1v9H7zM0 0v9l6-4.500z" fill="#555"/></svg></button>
          <a class="on" href="#">Model</a><a href="#">Layout1</a><a href="#">Layout2</a>
          <div class="hscroll d-flex ms-auto align-items-center">
            <button class="ms-1" aria-label="Scroll left"><svg width="6" height="8"><path d="M5 1L1 4l4 3" fill="none" stroke="#444" stroke-width="2"/></svg></button>
            <div class="thumb ms-1"></div><div class="flex-grow-1"></div>
            <button aria-label="Scroll right"><svg width="6" height="8"><path d="M1 1l4 3-4 3" fill="none" stroke="#444" stroke-width="2"/></svg></button>
          </div>
        </div>
      </section>
      <div class="rdock">
        <aside class="vdock"><div class="vgrip"></div><div data-tools="erase:Erase cp:Copy mirror:Mirror offset:Offset array:Array move:Move rotate:Rotate scale:Scale stretch:Stretch trim:Trim extend:Extend brkpt:Break_at_point brk:Break join:Join chamfer:Chamfer fillet:Fillet blend:Blend explode:Explode"></div></aside>
        <aside class="vdock"><div class="vgrip"></div><div data-tools="ord1:Bring_to_front ord2:Send_to_back ord3:Bring_above ord4:Send_under - ordtxt:Text_to_front ordhatch:Hatch_to_back"></div></aside>
      </div>
    </div>

    <div class="cmd d-flex flex-shrink-0 mt-1">
      <div class="cmdside d-flex flex-column align-items-center">
        <svg width="18" height="12"><path d="M1 5h17M1 8h17" stroke="#bbb" stroke-width="2" stroke-dasharray="2 1"/></svg>
        <button class="mt-1" aria-label="Close command line"><svg width="10" height="9"><path d="M1 0l8 9M9 0L1 9" stroke="#fff" stroke-width="2"/></svg></button>
        <button class="mt-2" aria-label="Customize command line"><svg width="14" height="16" viewBox="0 0 14 16"><path d="M5 7l7 7" stroke="#eee" stroke-width="3"/><path d="M2 3a3.500 3.500 0 005 5 3.500 3.500 0 00-2-6" fill="none" stroke="#eee" stroke-width="2"/></svg></button>
      </div>
      <div class="flex-grow-1 d-flex flex-column">
        <div class="hist">MIRROR<br>Select objects: Specify opposite corner: 3 found</div>
        <label class="prompt d-flex align-items-center"><svg class="ico"><use href="#mirror"/></svg><svg class="mx-1" width="5" height="4"><path d="M0 0h5L2.500 4z" fill="#888"/></svg><b>MIRROR</b><input type="text" aria-label="Command" value="Select objects:  Specify first point of mirror line: Specify second point of mirror line:"></label>
      </div>
    </div>
  </main>

  <footer class="statusbar d-flex flex-shrink-0">
    <div class="coord align-self-center">1399.76, 1034.71, 0.00</div>
    <div class="d-flex" data-status="snap:Infer dots:Snap grid:Grid ortho:Ortho *polar:Polar *osnap:Object_snap osnap3:3D_snap *otrack:Tracking *ducs:Dynamic_UCS *dyn:Dynamic_input *lwt:Lineweight *tpy:Transparency qp:Quick_properties cycle:Cycling plus:Annotation_monitor"></div>
    <span class="sb rule"></span>
    <div class="d-flex ms-auto">
      <button class="sb px-1 w-auto">MODEL</button><div class="d-flex" data-status="lay-p:Layout quick:Quick_view"></div><span class="sb rule me-1"></span>
      <button class="sb ms-1 scl"><svg class="ico"><use href="#anno"/></svg>1:1<svg class="ms-1" width="7" height="5"><path d="M0 0h7L3.500 5z"/></svg></button><div class="d-flex" data-status="anno2:Annotation_visibility annog:Add_scales"></div>
      <div class="d-flex ms-1" data-status="gear:Workspace lockg:Lock hw:Hardware"></div>
      <button class="sb ms-2" aria-label="Trusted"><svg class="ico"><use href="#trust"/></svg></button><button class="sb border-0" aria-label="Isolate objects"><svg class="ico"><use href="#bulb"/></svg></button>
      <button class="sb ms-1 more" aria-label="Status menu"><svg width="6" height="4"><path d="M0 0h6L3 4z"/></svg></button>
      <div class="d-flex" data-status="clean:Clean_screen"></div>
      <svg class="align-self-end mb-1 mx-1" width="10" height="10"><path d="M8 0h2v2H8zM4 4h2v2H4zM8 4h2v2H8zM0 8h2v2H0zM4 8h2v2H4zM8 8h2v2H8z" fill="#aaa"/></svg>
    </div>
  </footer>
</div>

<nav class="taskbar d-flex align-items-center flex-shrink-0">
  <button class="task" aria-label="Explorer"><span><svg class="ico" viewBox="0 0 34 34"><path fill="#f7e08a" d="M2 5h10l2 3h18v22H2z"/><path fill="#fff" d="M4 3h26v4H4z"/><path fill="#3a9a4a" d="M5 3h5v3H5z"/><path fill="#d33" d="M21 4h5v3h-5z"/><path fill="#f2cf66" d="M1 10h32v18H1z"/><path fill="#bfe8fa" stroke="#5fa8d4" d="M5 32V22q0-3 3-3h18q3 0 3 3v10h-5v-6H10v6z"/></svg></span></button>
  <button class="task" aria-label="Photo viewer"><span><svg class="ico" viewBox="0 0 34 34"><path fill="#f4e6d0" d="M4 4h24v22H4z"/><path fill="#e8a24a" d="M6 6h20v18H6z"/><path fill="#fff" d="M14 2h18v14H14zM18 18h13v10H18z"/><path fill="#a9c4e0" d="M15 3h16v12H15z"/><path fill="#7ab05a" d="M19 19h11v8H19z"/><circle cx="17" cy="15" r="7" fill="#e5531a"/><circle cx="17" cy="15" r="2.500" fill="#7a1a0a"/><path stroke="#fff" d="M14.500 3v13H31" fill="none"/><path fill="none" stroke="#f2cf92" stroke-width="4" d="M3 18q2 14 18 13"/></svg></span></button>
  <button class="task" aria-label="Media"><span><svg class="ico" viewBox="0 0 34 34"><path fill="#4f81b3" d="M5 5q12-4 20 0v22q-8 4-20 0-5-10 0-22z"/><path fill="#e8802a" d="M8 7h13v8H8zM8 17h13v9H8z"/><path stroke="#fff" stroke-width="2" stroke-dasharray="2 2" fill="none" d="M5 6q-4 10 0 20M22 6v20"/><path fill="none" stroke="#e5c08a" stroke-width="3" d="M28 5q-9 13-4 22 5 4 6-8 0 7 3 7"/></svg></span></button>
  <button class="task" aria-label="Internet Explorer"><span><svg class="ico" viewBox="0 0 34 34"><path fill="none" stroke="#55c3f3" stroke-width="6" d="M28 24a11 11 0 11.500-6H9"/><path fill="none" stroke="#f1bd2a" stroke-width="3" d="M5 31Q-2 30 8 16T31 3q3 3-2 9"/></svg></span></button>
  <button class="task" aria-label="Excel"><span><svg class="ico" viewBox="0 0 34 34"><path fill="#e8f4e4" stroke="#3b9a4a" stroke-width="1.500" d="M4 5l26-3v27H4z"/><path fill="#fff" stroke="#bbb" d="M18 14l14 3v14l-14-2z"/><path stroke="#2a8a3a" stroke-width="5" d="M8 8l11 16M19 8L7 24"/><path stroke="#9c9" d="M21 24l9 2M21 27l9 2"/></svg></span></button>
  <button class="task" aria-label="Word"><span><svg class="ico" viewBox="0 0 34 34"><path fill="#eaf2fb" stroke="#cfe0f4" stroke-width="1.500" d="M4 5l26-3v27H4z"/><path fill="#fff" stroke="#bbb" d="M20 14l12 3v14l-12-2z"/><path fill="none" stroke="#1f5bb0" stroke-width="4" d="M6 8l4 15 5-14 4 14 5-16"/><path stroke="#89b" d="M21 24l9 2M21 27l9 2"/></svg></span></button>
  <button class="task run" aria-label="Firefox"><span><svg class="ico" viewBox="0 0 34 34"><circle cx="17" cy="18" r="14" fill="#e8661a"/><circle cx="19" cy="13" r="11" fill="#2a62a8"/><path fill="#f08a1e" d="M4 9q3 0 6 3l6 1-4 4q2 6 8 5 8 0 8-9 6 8-1 15-8 6-17 1Q1 24 4 9z"/><path fill="#f8c52a" d="M30 12q3 8-3 14 0-3 1-7z"/></svg></span></button>
  <button class="task run" aria-label="Revit"><span><svg class="ico" viewBox="0 0 34 34"><path fill="#d9d9dc" d="M3 5h29v19H3z"/><path fill="#222" d="M3 23h29v8H3z"/><path fill="none" stroke="#8e2f96" stroke-width="5" d="M8 26l5-21h8q5 6-9 10l9 9"/><path fill="none" stroke="#d98ae0" stroke-width="2" d="M6 25l5-21h9"/><text x="27" y="30" font-family="Liberation Sans" font-weight="700" font-size="7" fill="#fff">A</text></svg></span></button>
  <button class="task run stack" aria-label="AutoCAD"><span><svg class="ico" viewBox="0 0 34 34"><path fill="#111" d="M2 6h30v17H2z"/><path fill="#d3141c" d="M2 23h30v9H2z"/><path fill="#777" stroke-width="1" d="M20 9h10v2H20zM22 13h8v1h-8zM24 17h6v2h-6z"/><path fill="#f0f0f0" stroke="#888" d="M5 26l4-23h5l9 19-5 2-2-5-6 1-1 6zM11 16l3-1-2-6z"/></svg></span></button>
  <button class="task run" aria-label="Sticky Notes"><span><svg class="ico" viewBox="0 0 34 34"><path fill="#9fd88a" d="M4 4l12 3-5 20-10-4z"/><path fill="#8ec3ea" d="M9 8l15 1v18H8z"/><path fill="#f7e06a" d="M14 13l15-4 4 18-15 4z"/></svg></span></button>
  <button class="task" aria-label="3ds Max"><span><svg class="ico" viewBox="0 0 34 34"><rect x="4" y="2" width="26" height="30" rx="2" fill="#2a2c2f" stroke="#555"/><path fill="none" stroke="#eee" stroke-width="2.500" d="M25 9H13q-4 0-4 5v7q0 4 4 4h8q4 0 4-4v-3q0-5-5-5h-4q-3 0-3 3t3 3h5"/></svg></span></button>
  <button class="task" aria-label="Chrome"><span><svg class="ico" viewBox="0 0 34 34"><circle cx="17" cy="17" r="14" fill="#34a343"/><path fill="#dd3a2e" d="M17 17L4.900 10a14 14 0 0124.200 0z"/><path fill="#f8d02e" d="M17 17l12.100-7A14 14 0 0117 31z"/><circle cx="17" cy="17" r="6.500" fill="#fff"/><circle cx="17" cy="17" r="5" fill="#3a7ad6"/></svg></span></button>
  <button class="task run" aria-label="Photoshop"><span><svg class="ico" viewBox="0 0 34 34"><path fill="#0b63a8" d="M2 2h30v30H2z"/><path fill="#0d4a86" d="M2 18h30v14H2z"/><text x="17" y="23" text-anchor="middle" font-family="Open Sans" font-weight="600" font-size="17" fill="#6fd0fb">Ps</text></svg></span></button>
  <button class="task run" aria-label="Dictionary"><span><svg class="ico" viewBox="0 0 34 34"><path fill="#e4e6ee" stroke="#999" d="M4 10l14 2-1 16-9-2z"/><path fill="#b7bccb" d="M18 12l13-2-4 15-10 3z"/><path fill="#f4f5f8" d="M4 10l13-4 14 4-13 2z"/><text x="8" y="23" font-family="Liberation Sans" font-weight="700" font-size="12" fill="#2a2a8a">λ</text><text x="20" y="23" font-family="Liberation Sans" font-weight="700" font-size="12" fill="#3a6a3a">7</text></svg></span></button>
  <button class="task run" aria-label="Paint"><span><svg class="ico" viewBox="0 0 34 34"><path fill="#d8edf8" stroke="#88b0cc" d="M3 20Q3 6 18 7q12 2 11 13-2 11-13 11-5-1-3-5-2-3-5 0-5 0-5-6z"/><circle cx="8" cy="20" r="3" fill="#e04a3a"/><circle cx="12" cy="13" r="3" fill="#6ab04a"/><circle cx="20" cy="11" r="3" fill="#f2c43a"/><circle cx="16" cy="22" r="3" fill="#3a70b0"/><path stroke="#e08a3a" stroke-width="3" d="M28 10l-5 21"/><path fill="#c98a5a" d="M26 10q-1-7 5-9 4 5-1 10z"/></svg></span></button>
  <button class="task run" aria-label="Calculator"><span><svg class="ico" viewBox="0 0 34 34"><rect x="7" y="3" width="21" height="29" rx="1" fill="#d8ebf8" stroke="#7aa8cc"/><path fill="#e8962a" d="M9 5h17v2H9z"/><path fill="#fff" stroke="#9ab" d="M9 8h17v8H9z"/><path stroke="#5a88b4" stroke-width="2.500" stroke-dasharray="3 1" d="M9 20h17M9 24h17M9 28h13"/><path stroke="#e8962a" stroke-width="3" d="M25 23v7"/><path fill="none" stroke="#245" d="M20.500 9.500h3v5h-3z"/></svg></span></button>
  <button class="task rec" aria-label="Camtasia recorder"><span><svg class="ico" viewBox="0 0 34 34"><g transform="rotate(-30 17 17)"><path fill="#222" stroke="#eee" stroke-width="2" d="M7 5h20v24H7z"/><path fill="#5a7a2a" d="M11 11h12v11H11z"/><path stroke="#ddd" d="M14 13l6 7M17 17l-3 4"/></g><circle cx="25" cy="25" r="6" fill="#dc1a1a" stroke="#eaa"/></svg></span></button>
  <button class="task run" aria-label="Camtasia"><span><svg class="ico" viewBox="0 0 34 34"><g transform="rotate(-30 17 17)"><path fill="#222" stroke="#eee" stroke-width="2" d="M7 5h20v24H7z"/><path fill="#5a7a2a" d="M11 11h12v11H11z"/><path stroke="#ddd" d="M14 13l6 7M17 17l-3 4"/></g></svg></span></button>
  <div class="ms-auto d-flex align-items-center tray">
    <svg width="8" height="5"><path d="M4 0l4 5H0z" fill="#fff"/></svg>
    <svg width="16" height="16"><path d="M1.500 1v15M2 2h5l1 2h5v5H7L6 8H2z" fill="#fff" stroke="#fff"/><path d="M10 6l6 10H4z" fill="#f5cc2a" stroke="#8a6a0a"/><path d="M10 9v4M10 14v1" stroke="#000" stroke-width="1.500"/></svg>
    <svg width="14" height="16"><path d="M6.500 3.500h6v12h-6zM8 1.500h3M1 5h4v4H1zM1.500 2v3M4.500 2v3M3 9v6" fill="#3a60a5" stroke="#fff" stroke-width="1.500"/></svg>
    <svg width="15" height="13"><path d="M0 11h2v2H0zM3 9h2v4H3zM6 6h2v7H6zM9 3h2v10H9z" fill="#fff"/><path d="M12 0h2v13h-2z" fill="#89a4d6"/></svg>
    <svg width="15" height="14"><path d="M0 4h3l4-4v14l-4-4H0z" fill="#fff"/><path d="M9 4q2 3 0 6M11 2q4 5 0 10" fill="none" stroke="#fff"/></svg>
    <div class="clock text-center ms-1">ESP<br>LAA</div>
    <div class="clock text-center">9:31 p. m.<br>03/09/2013</div>
  </div>
</nav>

<script>
// Builds toolbar buttons from "icon:Label" lists; "|" and "-" are separators, "v" a drop-down arrow, "~" a dimmed tool.
const icon = id => `<svg class="ico" aria-hidden="true"><use href="#${id}"/></svg>`;
document.querySelectorAll('[data-tools]').forEach(box => {
  box.innerHTML = box.dataset.tools.split(' ').map(t => {
    if (t === '|') return '<span class="tsep"></span>';
    if (t === '-') return '<div class="hsep"></div>';
    if (t === 'v') return '<button class="dd" aria-label="More"><svg width="6" height="4"><path d="M0 0h6L3 4z" fill="currentColor"/></svg></button>';
    const dim = t[0] === '~', [id, label] = t.replace('~', '').split(':');
    return `<button class="tb${dim ? ' dim' : ''}" aria-label="${label.replace(/_/g, ' ')}">${icon(id)}</button>`;
  }).join('');
});
// Status bar toggles; "*" marks one that is switched on.
document.querySelectorAll('[data-status]').forEach(box => {
  box.innerHTML = box.dataset.status.split(' ').map(t => {
    const act = t[0] === '*', [id, label] = t.replace('*', '').split(':');
    return `<button class="sb${act ? ' act' : ''}" aria-label="${label.replace(/_/g, ' ')}">${icon(id)}</button>`;
  }).join('');
});
</script>
<script src="https://cdn.jsdelivr.net/npm/bootstrap@5.3.0/dist/js/bootstrap.bundle.min.js"></script>
</body>
</html>
